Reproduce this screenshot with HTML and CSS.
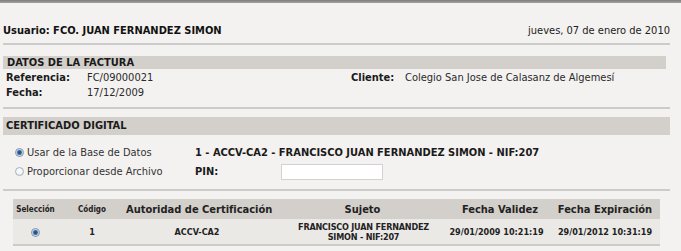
FILE: index.html
```html
<!DOCTYPE html>
<html lang="es">
<head>
<meta charset="utf-8">
<title>Firma de factura</title>
<link rel="stylesheet" href="styles.css">
</head>
<body>
<div class="topbar"></div>
<div class="page">
  <div class="userbar">
    <span class="user">Usuario: FCO. JUAN FERNANDEZ SIMON</span>
    <span class="date">jueves, 07 de enero de 2010</span>
  </div>

  <section class="block factura">
    <h2 class="bar">DATOS DE LA FACTURA</h2>
    <div class="fields">
      <span class="lbl">Referencia:</span><span>FC/09000021</span><span class="lbl">Cliente:</span><span>Colegio San Jose de Calasanz de Algemesí</span>
      <span class="lbl">Fecha:</span><span>17/12/2009</span><span></span><span></span>
    </div>
  </section>

  <section class="block cert">
    <h2 class="bar bar-tall">CERTIFICADO DIGITAL</h2>
    <div class="options">
      <label class="opt"><input type="radio" name="src" class="radio" checked><span>Usar de la Base de Datos</span></label>
      <span class="strong">1 - ACCV-CA2 - FRANCISCO JUAN FERNANDEZ SIMON - NIF:207</span>
      <label class="opt"><input type="radio" name="src" class="radio"><span>Proporcionar desde Archivo</span></label>
      <span class="pin"><b class="pin-lbl">PIN:</b><input type="text" class="pin-input"></span>
    </div>
  </section>

  <table class="certs">
    <colgroup>
      <col class="c-sel"><col class="c-cod"><col class="c-aut"><col class="c-suj"><col class="c-val"><col class="c-exp">
    </colgroup>
    <thead>
      <tr>
        <th class="small">Selección</th>
        <th class="small">Código</th>
        <th>Autoridad de Certificación</th>
        <th class="h-suj">Sujeto</th>
        <th class="h-val">Fecha Validez</th>
        <th>Fecha Expiración</th>
      </tr>
    </thead>
    <tbody>
      <tr>
        <td><input type="radio" name="cert" class="radio" checked></td>
        <td>1</td>
        <td>ACCV-CA2</td>
        <td class="suj">FRANCISCO JUAN FERNANDEZ SIMON - NIF:207</td>
        <td>29/01/2009 10:21:19</td>
        <td>29/01/2012 10:31:19</td>
      </tr>
    </tbody>
  </table>
</div>
</body>
</html>
```

FILE: styles.css
```css
* { box-sizing: border-box; }

html, body {
  margin: 0;
  padding: 0;
  background: #f3f2f0;
}

body {
  font-family: "DejaVu Sans Condensed", "DejaVu Sans", sans-serif;
  font-size: 11px;
  color: #1e1e1e;
  width: 681px;
  height: 251px;
  overflow: hidden;
}

.topbar {
  height: 3px;
  background: linear-gradient(#7d7d7d, #a4a4a4);
}

.page {
  margin-left: 3px;
  width: 667px;
}

.userbar {
  height: 42px;
  display: flex;
  justify-content: space-between;
  align-items: flex-end;
  padding-bottom: 5px;
  border-bottom: 2px solid #cbcbcb;
  line-height: 14px;
}

.user {
  font-weight: bold;
  font-size: 11px;
  color: #111;
}

.date {
  font-size: 11px;
  color: #222;
}

.block {
  border-bottom: 2px solid #cbcbcb;
}

.bar {
  margin: 0;
  background: #d3cfca;
  font-size: 11px;
  font-weight: bold;
  color: #1a1a1a;
  line-height: 13px;
  height: 13px;
  padding-left: 4px;
}

.factura {
  padding-top: 11px;
  padding-bottom: 7px;
}

.factura .bar {
  width: 663px;
}

.fields {
  display: grid;
  grid-template-columns: 81px 264px 54px 1fr;
  grid-auto-rows: 15px;
  line-height: 15px;
  padding-left: 3px;
  padding-top: 1px;
  color: #2a2a2a;
}

.lbl {
  font-weight: bold;
  color: #1a1a1a;
}

.cert {
  padding-top: 8px;
  padding-bottom: 8px;
}

.bar-tall {
  height: 18px;
  line-height: 18px;
  padding-left: 3px;
}

.options {
  display: grid;
  grid-template-columns: 192px 1fr;
  grid-auto-rows: 19px;
  align-items: center;
  margin-top: 8px;
}

.opt {
  display: flex;
  align-items: center;
  gap: 3px;
  padding-left: 12px;
  color: #333;
}

.strong {
  font-weight: bold;
  color: #1a1a1a;
}

.pin {
  display: flex;
  align-items: center;
}

.pin-lbl {
  width: 86px;
  color: #1a1a1a;
}

.pin-input {
  width: 102px;
  height: 16px;
  margin: 0;
  border: 1px solid #d2d2d2;
  background: #fff;
  padding: 0 2px;
}

.radio {
  -webkit-appearance: none;
  appearance: none;
  margin: 0;
  width: 9px;
  height: 9px;
  border-radius: 50%;
  border: 1px solid #a9b3be;
  background: radial-gradient(circle at 45% 40%, #ffffff 0, #e3e6ea 100%);
  flex: none;
}

.radio:checked {
  border-color: #7f94ad;
  background: radial-gradient(circle at 50% 50%, #1f4d80 0, #2d5f95 1.8px, #8fb0d3 2.6px, #e8eef5 3.4px);
}

.certs {
  margin: 8px 0 0 10px;
  width: 647px;
  table-layout: fixed;
  border-collapse: collapse;
  border-bottom: 2px solid #cdcbc7;
}

.c-sel { width: 45px; }
.c-cod { width: 68px; }
.c-aut { width: 142px; }
.c-suj { width: 175px; }
.c-val { width: 107px; }
.c-exp { width: 110px; }

.certs th {
  background: #d3cfca;
  height: 20px;
  padding: 0;
  font-size: 11px;
  font-weight: bold;
  color: #222;
  text-align: center;
  vertical-align: middle;
  white-space: nowrap;
}

.certs th.small {
  font-size: 8px;
}

.certs th.h-suj {
  padding-left: 14px;
}

.certs th.h-val {
  padding-left: 7px;
}

.certs td {
  background: #ebe9e6;
  height: 26px;
  padding: 0;
  font-size: 9px;
  font-weight: bold;
  color: #222;
  text-align: center;
  vertical-align: middle;
  line-height: 10px;
  white-space: nowrap;
}

.certs td .radio {
  vertical-align: middle;
}

.certs td.suj {
  white-space: normal;
  letter-spacing: -0.2px;
  padding: 0 0 0 16px;
}
```
